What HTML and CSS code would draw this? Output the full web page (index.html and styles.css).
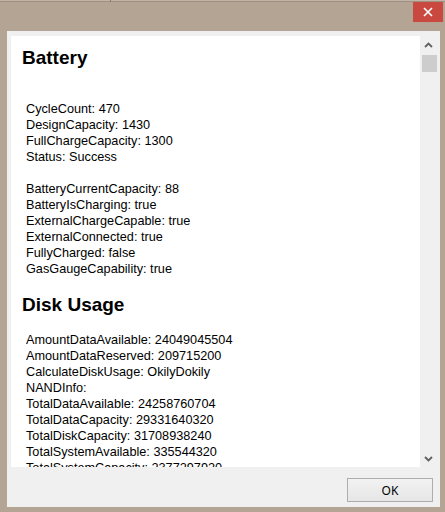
FILE: index.html
```html
<!DOCTYPE html>
<html>
<head>
<meta charset="utf-8">
<link rel="stylesheet" href="styles.css">
</head>
<body>
<div class="window">
  <div class="topedge"><span class="tick"></span></div>
  <div class="titlebar">
    <div class="close">
      <svg width="10" height="10" viewBox="0 0 10 10"><path d="M1 1 L9 9 M9 1 L1 9" stroke="#fff" stroke-width="1.6" fill="none"/></svg>
    </div>
  </div>
  <div class="client">
    <div class="panel">
      <div class="content">
        <h2 class="heading">Battery</h2>
        <div class="block">
          <div class="gap"></div>
          <div class="line">CycleCount: 470</div>
          <div class="line">DesignCapacity: 1430</div>
          <div class="line">FullChargeCapacity: 1300</div>
          <div class="line">Status: Success</div>
          <div class="gap"></div>
          <div class="line">BatteryCurrentCapacity: 88</div>
          <div class="line">BatteryIsCharging: true</div>
          <div class="line">ExternalChargeCapable: true</div>
          <div class="line">ExternalConnected: true</div>
          <div class="line">FullyCharged: false</div>
          <div class="line">GasGaugeCapability: true</div>
        </div>
        <h2 class="heading">Disk Usage</h2>
        <div class="block">
          <div class="line">AmountDataAvailable: 24049045504</div>
          <div class="line">AmountDataReserved: 209715200</div>
          <div class="line">CalculateDiskUsage: OkilyDokily</div>
          <div class="line">NANDInfo:</div>
          <div class="line">TotalDataAvailable: 24258760704</div>
          <div class="line">TotalDataCapacity: 29331640320</div>
          <div class="line">TotalDiskCapacity: 31708938240</div>
          <div class="line">TotalSystemAvailable: 335544320</div>
          <div class="line">TotalSystemCapacity: 2377297920</div>
        </div>
      </div>
      <div class="scrollbar">
        <div class="arrow">
          <svg width="9" height="6" viewBox="0 0 9 6"><path d="M1 5 L4.5 1.5 L8 5" stroke="#606060" stroke-width="1.8" fill="none"/></svg>
        </div>
        <div class="thumb"></div>
        <div class="track"></div>
        <div class="arrow">
          <svg width="9" height="6" viewBox="0 0 9 6"><path d="M1 1 L4.5 4.5 L8 1" stroke="#606060" stroke-width="1.8" fill="none"/></svg>
        </div>
      </div>
    </div>
    <div class="footer">
      <button class="ok">OK</button>
    </div>
  </div>
</div>
</body>
</html>
```

FILE: styles.css
```css
html, body {
  margin: 0;
  padding: 0;
}
body {
  background: #b4a493;
}
.window {
  width: 445px;
  height: 512px;
  background: #b4a493;
  display: flex;
  flex-direction: column;
  overflow: hidden;
}
.topedge {
  height: 1px;
  background: #c2b5a8;
  border-bottom: 1px solid #9e8f80;
  position: relative;
}
.tick {
  position: absolute;
  left: 110px;
  top: 0;
  width: 1px;
  height: 2px;
  background: #8a7c6f;
}
.titlebar {
  height: 29px;
  display: flex;
  justify-content: flex-end;
  align-items: flex-start;
}
.close {
  width: 30px;
  height: 20px;
  margin-right: 2px;
  background: #c9483f;
  display: flex;
  align-items: center;
  justify-content: center;
}
.client {
  margin-left: 7px;
  width: 433px;
  height: 476px;
  background: #f0f0f0;
  box-sizing: border-box;
  padding: 5px 3px 0 4px;
  display: flex;
  flex-direction: column;
}
.panel {
  height: 431px;
  display: flex;
}
.content {
  flex: 1;
  background: #ffffff;
  overflow: hidden;
  padding: 11px 0 0 11px;
  font-family: "Liberation Sans", Arial, sans-serif;
  color: #000;
}
.heading {
  margin: 0;
  font-size: 19px;
  font-weight: bold;
  line-height: 22px;
}
.block {
  margin: 16px 0 17px 4px;
  font-size: 12.7px;
  line-height: 16px;
}
.gap {
  height: 16px;
}
.line {
  white-space: nowrap;
}
.scrollbar {
  width: 17px;
  background: #f0f0f0;
  display: flex;
  flex-direction: column;
}
.arrow {
  height: 17px;
  display: flex;
  align-items: center;
  justify-content: center;
}
.thumb {
  height: 17px;
  margin: 2px 0 0 2px;
  background: #cdcdcd;
}
.track {
  flex: 1;
}
.footer {
  height: 40px;
  display: flex;
  justify-content: flex-end;
  align-items: flex-start;
  padding: 11px 4px 0 0;
  box-sizing: border-box;
}
.ok {
  width: 86px;
  height: 24px;
  border: 1px solid #adadad;
  background: linear-gradient(#f2f2f2, #e6e6e6);
  font-family: "Noto Sans", "Open Sans", sans-serif;
  font-size: 12px;
  color: #000;
  padding: 0;
  margin: 0;
}
```
